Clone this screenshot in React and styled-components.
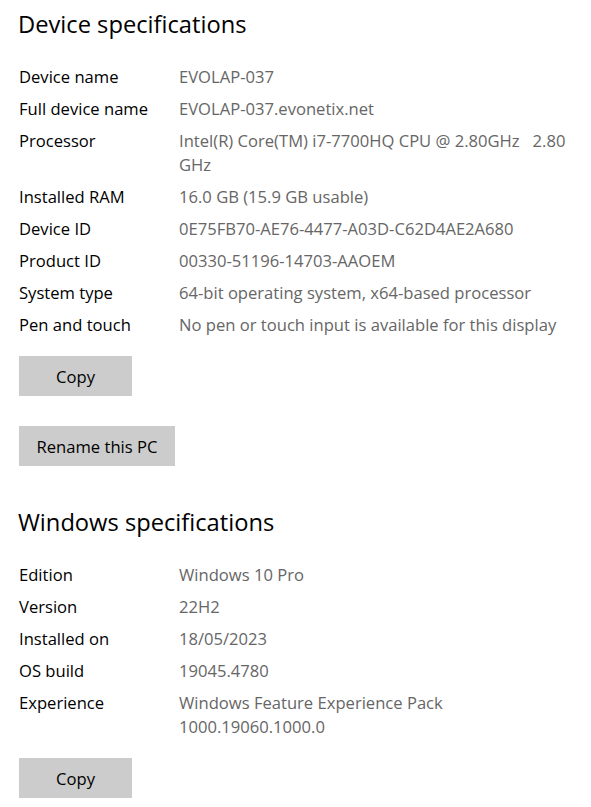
import React from "react";
import styled, { createGlobalStyle } from "styled-components";

const Global = createGlobalStyle`
  html, body { margin: 0; padding: 0; background: #fff; }
  body { font-family: "Open Sans", "Noto Sans", sans-serif; color: #000; }
`;

const Page = styled.div`
  padding: 6px 0 0 19px;
  width: 591px;
  box-sizing: border-box;
`;

const Section = styled.section`
  display: flex;
  flex-direction: column;
  align-items: flex-start;
  margin-bottom: ${(p) => p.$mb || 0}px;
`;

const Title = styled.h2`
  margin: 0 0 23px -1px;
  font-size: 23.7px;
  font-weight: 400;
  line-height: 36px;
  color: #000;
`;

const Specs = styled.div`
  display: grid;
  grid-template-columns: 160px 412px;
  row-gap: 8px;
  margin-bottom: 19px;
`;

const Label = styled.div`
  font-size: 16.6px;
  line-height: 24px;
  color: #000;
  white-space: nowrap;
`;

const Value = styled.div`
  font-size: 16.6px;
  line-height: 24px;
  color: #666;
  white-space: pre;
`;

const Button = styled.button`
  height: 40px;
  min-width: ${(p) => p.$w || 113}px;
  padding: 0 16px;
  border: none;
  background: #ccc;
  font-family: inherit;
  font-size: 16.6px;
  color: #000;
  margin-bottom: ${(p) => p.$mb || 0}px;
`;

const device = [
  ["Device name", "EVOLAP-037"],
  ["Full device name", "EVOLAP-037.evonetix.net"],
  ["Processor", "Intel(R) Core(TM) i7-7700HQ CPU @ 2.80GHz   2.80\nGHz"],
  ["Installed RAM", "16.0 GB (15.9 GB usable)"],
  ["Device ID", "0E75FB70-AE76-4477-A03D-C62D4AE2A680"],
  ["Product ID", "00330-51196-14703-AAOEM"],
  ["System type", "64-bit operating system, x64-based processor"],
  ["Pen and touch", "No pen or touch input is available for this display"],
];

const windows = [
  ["Edition", "Windows 10 Pro"],
  ["Version", "22H2"],
  ["Installed on", "18/05/2023"],
  ["OS build", "19045.4780"],
  ["Experience", "Windows Feature Experience Pack\n1000.19060.1000.0"],
];

const SpecList = ({ items }) => (
  <Specs>
    {items.map(([k, v]) => (
      <React.Fragment key={k}>
        <Label>{k}</Label>
        <Value>{v}</Value>
      </React.Fragment>
    ))}
  </Specs>
);

export default function App() {
  return (
    <Page>
      <Global />
      <Section $mb={38}>
        <Title>Device specifications</Title>
        <SpecList items={device} />
        <Button $mb={30}>Copy</Button>
        <Button $w={156}>Rename this PC</Button>
      </Section>
      <Section>
        <Title>Windows specifications</Title>
        <SpecList items={windows} />
        <Button>Copy</Button>
      </Section>
    </Page>
  );
}
